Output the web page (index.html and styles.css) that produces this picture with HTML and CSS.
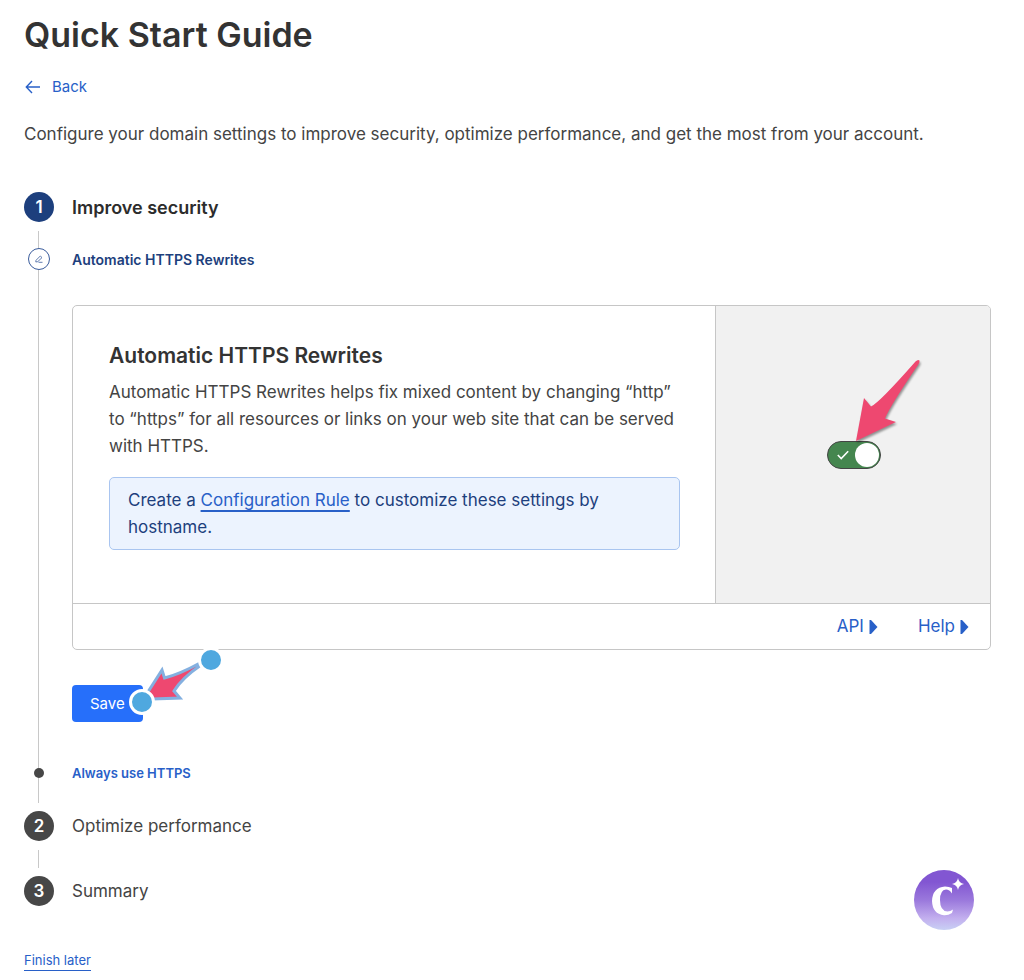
FILE: index.html
```html
<!DOCTYPE html>
<html lang="en">
<head>
  <meta charset="UTF-8">
  <meta name="viewport" content="width=device-width, initial-scale=1">
  <title>Quick Start Guide</title>
  <link rel="stylesheet" href="styles.css">
</head>
<body>
  <main class="page">
    <h1>Quick Start Guide</h1>

    <a class="back-link" href="#">
      <svg width="18" height="16" viewBox="0 0 18 16" fill="none" stroke="currentColor" stroke-width="1.4" aria-hidden="true">
        <path d="M16 8H2.5M8 2L2.3 8L8 14"/>
      </svg>
      Back
    </a>

    <p class="intro">Configure your domain settings to improve security, optimize performance, and get the most from your account.</p>

    <ol class="steps">
      <li>
        <div class="step-head active">
          <span class="step-number">1</span>
          <h2>Improve security</h2>
        </div>

        <div class="substeps">
          <div class="substep current">
            <span class="substep-icon">
              <svg width="10" height="10" viewBox="0 0 10 10" fill="none" stroke="currentColor" stroke-width="0.8" aria-hidden="true">
                <path d="M2 6.3L6.3 2L8 3.6L3.8 7.6L1.8 8ZM4.5 8.3H8.5"/>
              </svg>
            </span>
            <h3>Automatic HTTPS Rewrites</h3>
          </div>

          <div class="substep-body">
            <section class="card">
              <div class="card-main">
                <div class="card-text">
                  <h4>Automatic HTTPS Rewrites</h4>
                  <p>Automatic HTTPS Rewrites helps fix mixed content by changing “http” to “https” for all resources or links on your web site that can be served with HTTPS.</p>
                  <p class="note">Create a <a href="#">Configuration Rule</a> to customize these settings by hostname.</p>
                </div>
                <div class="card-control">
                  <div class="toggle">
                    <input type="checkbox" id="rewrites" aria-label="Automatic HTTPS Rewrites" checked>
                    <svg class="toggle-check" width="12" height="10" viewBox="0 0 12 10" fill="none" stroke="#fff" stroke-width="1.6" aria-hidden="true">
                      <path d="M0.8 5L4.2 8.5L11.2 1.2"/>
                    </svg>
                    <svg class="toggle-arrow" width="76" height="92" viewBox="0 0 76 92" aria-hidden="true">
                      <path d="M6 85L14 42L21 50.5Q29 47 65.5 5.5Q68 3 69.5 4.5Q70 6 68 9Q40 50 35 62.5L46 66Z" fill="#ee4870"/>
                    </svg>
                  </div>
                </div>
              </div>
              <div class="card-footer">
                <a href="#">API
                  <svg width="9" height="14" viewBox="0 0 9 14" fill="currentColor" aria-hidden="true"><path d="M0.5 0H2L8.5 7L2 14H0.5Z"/></svg>
                </a>
                <a href="#">Help
                  <svg width="9" height="14" viewBox="0 0 9 14" fill="currentColor" aria-hidden="true"><path d="M0.5 0H2L8.5 7L2 14H0.5Z"/></svg>
                </a>
              </div>
            </section>

            <div class="save-row">
              <button class="save-button" type="button">Save</button>
              <svg class="save-arrow" width="100" height="72" viewBox="0 0 100 72" aria-hidden="true">
                <path d="M24 50L40 25L42.500 33Q58 29 78 18L79 20Q60 33 52 46L58 53L30 54Z" fill="#ee4870" stroke="#84b0e0" stroke-width="3"/>
                <circle cx="89" cy="15" r="11.5" fill="#4fa8df" stroke="#fff" stroke-width="3"/>
                <circle cx="20" cy="57" r="11.5" fill="#4fa8df" stroke="#fff" stroke-width="3"/>
              </svg>
            </div>
          </div>

          <div class="substep">
            <span class="substep-dot"></span>
            <a href="#">Always use HTTPS</a>
          </div>
        </div>
      </li>

      <li>
        <div class="step-head">
          <span class="step-number">2</span>
          <h2>Optimize performance</h2>
        </div>
        <div class="connector"></div>
      </li>

      <li>
        <div class="step-head">
          <span class="step-number">3</span>
          <h2>Summary</h2>
        </div>
      </li>
    </ol>

    <a class="finish-link" href="#">Finish later</a>
  </main>

  <button class="assistant" type="button" aria-label="Open assistant">
    <svg width="60" height="60" viewBox="0 0 60 60" aria-hidden="true">
      <defs>
        <linearGradient id="orb" x1="0" y1="0" x2="0" y2="1">
          <stop offset="0.2" stop-color="#8256d2"/>
          <stop offset="0.5" stop-color="#9a78dc"/>
          <stop offset="0.8" stop-color="#c2aeee"/>
          <stop offset="1" stop-color="#c8d0f4"/>
        </linearGradient>
      </defs>
      <circle cx="30" cy="30" r="30" fill="url(#orb)"/>
      <path d="M38 18V23.500Q35.500 19.500 32 19.500Q26 20 26 30Q26 41 33.500 41.500Q36.500 41.500 39 39.500L38 43Q34 45.500 30 45.200Q18.500 44 18 31Q18.500 17.500 31 16.500Q35 16.500 38 18Z" fill="#fff"/>
      <path d="M44 8Q44.800 13.200 50 14Q44.800 14.800 44 20Q43.200 14.800 38 14Q43.200 13.200 44 8Z" fill="#fff"/>
    </svg>
  </button>
</body>
</html>
```
FILE: styles.css
```css
* {
  margin: 0;
  padding: 0;
  box-sizing: border-box;
}

body {
  font-family: Inter, 'Liberation Sans', sans-serif;
  font-size: 17px;
  line-height: 27px;
  color: #444;
  background: #fff;
}

a {
  color: #2860c8;
  text-decoration: none;
}

.page {
  padding: 11px 33px 8px 24px;
}

h1 {
  font-size: 34px;
  line-height: 48px;
  font-weight: 600;
  color: #333;
}

.back-link {
  display: flex;
  align-items: center;
  gap: 10px;
  width: fit-content;
  margin-top: 16px;
  font-size: 15px;
  line-height: 24px;
}

.intro {
  margin: 22px 0 44px;
}

/* Steps */
.steps {
  list-style: none;
}

.step-head {
  display: flex;
  align-items: center;
  gap: 18px;
  height: 30px;
}

.step-head h2 {
  font-size: 17px;
  font-weight: 400;
}

.step-head.active h2 {
  font-size: 18px;
  font-weight: 600;
  color: #2c2c2c;
}

.step-number {
  width: 30px;
  height: 30px;
  border-radius: 50%;
  background: #474747;
  color: #fff;
  font-size: 17px;
  font-weight: 600;
  line-height: 30px;
  text-align: center;
}

.active .step-number {
  background: #1d3f7d;
}

/* the grey line runs behind the substep markers */
.substeps,
.connector {
  margin: 9px 0 8px;
  background: linear-gradient(#c8c8c8, #c8c8c8) 14px 0 / 1px 100% no-repeat;
}

.substeps {
  padding: 15px 0 17px;
}

.connector {
  height: 18px;
}

.substep {
  display: flex;
  align-items: center;
  gap: 18px;
  height: 26px;
  font-size: 13px;
  font-weight: 600;
}

.substep h3 {
  font-size: 14px;
  font-weight: 600;
  color: #1d3f7d;
}

.substep-icon {
  display: flex;
  align-items: center;
  justify-content: center;
  width: 22px;
  height: 22px;
  margin: 0 4px;
  border: 1px solid #3a5c9c;
  border-radius: 50%;
  background: #fff;
  color: #3a5c9c;
}

.substep-dot {
  width: 10px;
  height: 10px;
  margin: 0 10px;
  border-radius: 50%;
  background: #474747;
}

.substep-body {
  padding: 33px 0 38px 48px;
}

/* Card */
.card {
  border: 1px solid #c6c6c6;
  border-radius: 5px;
  overflow: hidden;
}

.card-main {
  display: grid;
  grid-template-columns: 7fr 3fr;
}

.card-text {
  padding: 36px 35px 53px 36px;
}

.card-text h4 {
  margin-bottom: 10px;
  font-size: 21px;
  font-weight: 600;
  color: #333;
}

.note {
  margin-top: 17px;
  padding: 9px 18px 8px;
  border: 1px solid #a9c5f0;
  border-radius: 5px;
  background: #ecf3fe;
  color: #1d3f7d;
}

.note a {
  text-decoration: underline;
  text-decoration-thickness: 2px;
  text-decoration-skip-ink: none;
  text-underline-offset: 4px;
}

.card-control {
  display: flex;
  align-items: center;
  justify-content: center;
  padding-left: 2px;
  border-left: 1px solid #c6c6c6;
  background: #f1f1f1;
}

.toggle {
  position: relative;
  display: flex;
}

.toggle input {
  appearance: none;
  display: flex;
  width: 54px;
  height: 28px;
  padding: 1px;
  border: 1px solid #444;
  border-radius: 14px;
  background: #45864f;
  cursor: pointer;
}

.toggle input::before {
  content: '';
  width: 24px;
  height: 24px;
  border-radius: 50%;
  background: #fff;
}

.toggle input:checked::before {
  margin-left: auto;
}

.toggle-check {
  position: absolute;
  left: 10px;
  top: 9px;
  pointer-events: none;
}

.toggle-arrow {
  position: absolute;
  left: 23px;
  bottom: 21px;
  filter: drop-shadow(1px 2px 1px rgba(0, 0, 0, 0.4));
  pointer-events: none;
}

.card-footer {
  display: flex;
  justify-content: flex-end;
  gap: 40px;
  padding: 9px 21px;
  border-top: 1px solid #c6c6c6;
}

.card-footer a {
  display: flex;
  align-items: center;
  gap: 5px;
}

/* Save */
.save-row {
  position: relative;
  margin-top: 35px;
}

.save-button {
  display: block;
  height: 37px;
  padding: 0 18px;
  border: none;
  border-radius: 4px;
  background: #266ffa;
  color: #fff;
  font-family: inherit;
  font-size: 15px;
  cursor: pointer;
}

.save-arrow {
  position: absolute;
  left: 50px;
  top: -40px;
  pointer-events: none;
}

.finish-link {
  display: inline-block;
  margin-top: 44px;
  border-bottom: 1px solid #2860c8;
  font-size: 13px;
  line-height: 20px;
}

.assistant {
  position: fixed;
  right: 50px;
  bottom: 50px;
  display: flex;
  border: none;
  border-radius: 50%;
  background: none;
  cursor: pointer;
}
```
